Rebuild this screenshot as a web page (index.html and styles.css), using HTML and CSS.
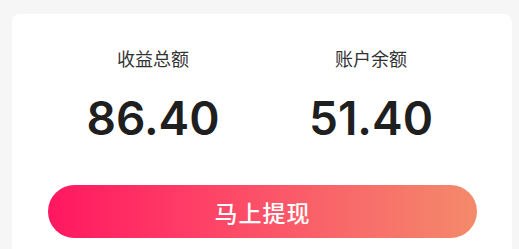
FILE: index.html
```html
<!DOCTYPE html>
<html lang="zh-CN">
<head>
<meta charset="utf-8">
<link rel="stylesheet" href="styles.css">
</head>
<body>
<div class="card">
  <div class="stats">
    <div class="stat">
      <div class="label">收益总额</div>
      <div class="value">86.40</div>
    </div>
    <div class="stat">
      <div class="label">账户余额</div>
      <div class="value">51.40</div>
    </div>
  </div>
  <button class="withdraw">马上提现</button>
</div>
</body>
</html>
```
FILE: styles.css
```css
html, body {
  margin: 0;
  padding: 0;
}
body {
  background: #f6f6f6;
  padding: 14px 7px 0 12px;
  height: 249px;
  box-sizing: border-box;
  overflow: hidden;
  font-family: "Noto Sans CJK SC", "Noto Sans", sans-serif;
}
.card {
  background: #ffffff;
  border-radius: 8px 8px 0 0;
  width: 500px;
  height: 235px;
  padding-top: 31px;
  box-sizing: border-box;
}
.stats {
  display: flex;
  padding: 0 32px;
}
.stat {
  flex: 1;
  display: flex;
  flex-direction: column;
  align-items: center;
}
.label {
  font-size: 18px;
  line-height: 26px;
  color: #333333;
}
.value {
  margin-top: 19px;
  font-family: "Inter", "Liberation Sans", sans-serif;
  font-weight: 600;
  font-size: 46px;
  line-height: 56px;
  color: #1f1f1f;
}
.withdraw {
  display: block;
  margin: 39px 0 0 36px;
  width: 429px;
  height: 53px;
  border: none;
  border-radius: 27px;
  background: linear-gradient(90deg, #ff1760 0%, #ff3a66 30%, #f86a6a 70%, #f48a6a 100%);
  color: #ffffff;
  font-family: "Noto Sans CJK SC", sans-serif;
  font-size: 23px;
  font-weight: 500;
  letter-spacing: 1px;
  padding: 0;
}
```
